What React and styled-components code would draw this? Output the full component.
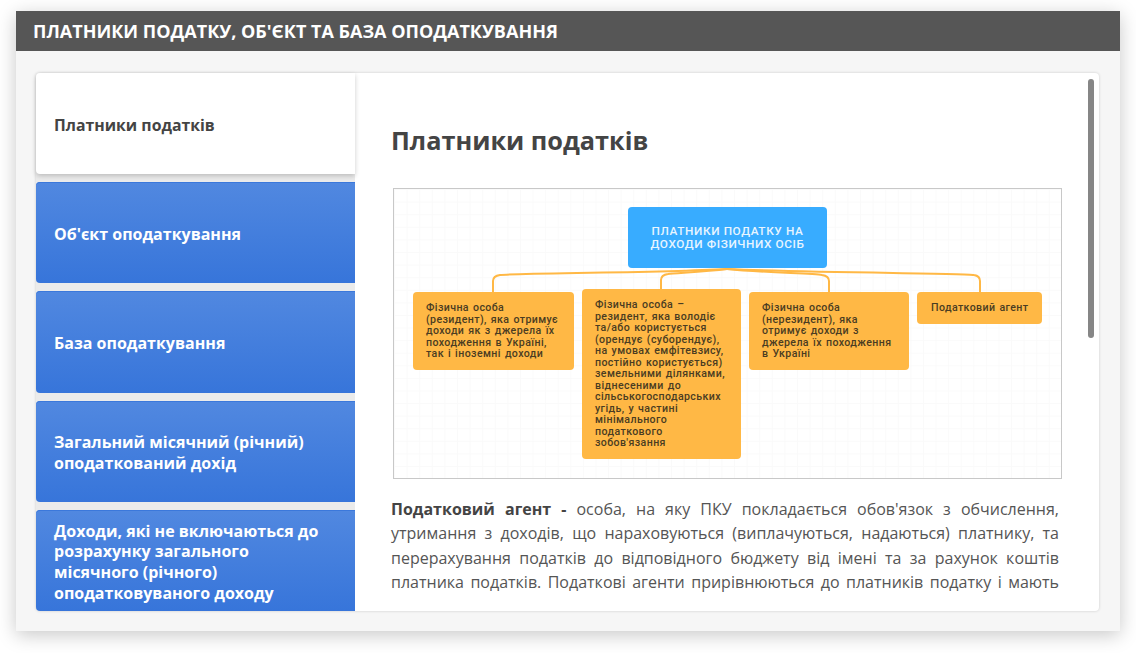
import styled, { createGlobalStyle } from 'styled-components';

const GlobalStyle = createGlobalStyle`
  html, body {
    margin: 0;
    padding: 0;
    background: #fff;
    font-family: "Open Sans", "Noto Sans", sans-serif;
  }
`;

const Page = styled.div`
  width: 1136px;
  height: 653px;
  box-sizing: border-box;
  padding: 11px 16px 22px;
  overflow: hidden;
`;

const Card = styled.section`
  height: 100%;
  display: flex;
  flex-direction: column;
  background: #f6f6f6;
  box-shadow: 0 4px 18px rgba(0, 0, 0, 0.22);
`;

const Header = styled.header`
  height: 40px;
  flex: none;
  display: flex;
  align-items: center;
  padding-left: 17px;
  background: #565656;
  color: #fff;
  font-size: 18px;
  font-weight: 700;
  text-transform: uppercase;
`;

const Body = styled.div`
  flex: 1;
  min-height: 0;
  padding: 22px 21px 20px 20px;
  display: flex;
`;

const Panel = styled.div`
  position: relative;
  flex: 1;
  min-width: 0;
  display: flex;
  background: #fff;
  border-radius: 4px;
  box-shadow: 0 0 3px rgba(0, 0, 0, 0.18);
`;

const Side = styled.nav`
  width: 319px;
  flex: none;
  display: flex;
  flex-direction: column;
  gap: 8px;
  background: #ebebeb;
  border-radius: 4px 0 0 4px;
`;

const Tab = styled.button`
  flex: 1;
  min-height: 0;
  border: none;
  border-radius: 4px 0 0 4px;
  padding: 3px 24px 0 18px;
  text-align: left;
  font-family: inherit;
  font-size: ${(p) => (p.$active ? '15.8px' : '16px')};
  line-height: 20.6px;
  font-weight: 700;
  color: ${(p) => (p.$active ? '#444' : '#fff')};
  background: ${(p) =>
    p.$active ? '#fff' : 'linear-gradient(180deg, #5188e0 0%, #3775da 100%)'};
  box-shadow: ${(p) =>
    p.$active ? '0 2px 5px rgba(0, 0, 0, 0.2)' : 'inset 0 1px 0 #3b78db'};
`;

const Content = styled.main`
  flex: 1;
  min-width: 0;
  height: 538px;
  box-sizing: border-box;
  padding: 0 36px;
  overflow: hidden;
`;

const Thumb = styled.div`
  position: absolute;
  top: 6px;
  right: 5px;
  width: 6px;
  height: 259px;
  border-radius: 3px;
  background: #868686;
`;

const Title = styled.h2`
  margin: 0;
  padding-top: 48px;
  font-size: 25.3px;
  line-height: 38px;
  font-weight: 700;
  color: #444;
`;

const Diagram = styled.figure`
  position: relative;
  box-sizing: border-box;
  margin: 29px 0 0 2px;
  width: 669px;
  height: 291px;
  border: 1px solid #c8c8c8;
  background-color: #fff;
  background-image: linear-gradient(#fafafa 1px, transparent 1px),
    linear-gradient(90deg, #fafafa 1px, transparent 1px);
  background-size: 12.6px 12.6px;
  font-family: Roboto, "Noto Sans", sans-serif;
`;

const Lines = styled.svg`
  position: absolute;
  inset: 0;
`;

const RootNode = styled.div`
  position: absolute;
  left: 234px;
  top: 18px;
  width: 199px;
  height: 61px;
  display: flex;
  align-items: center;
  justify-content: center;
  text-align: center;
  background: #38acff;
  border-radius: 4px;
  color: #e8f5ff;
  font-size: 11.8px;
  line-height: 13px;
  font-weight: 500;
  letter-spacing: 0.6px;
`;

const Node = styled.div`
  position: absolute;
  left: ${(p) => p.$x}px;
  top: ${(p) => p.$y}px;
  width: ${(p) => p.$w}px;
  height: ${(p) => p.$h}px;
  box-sizing: border-box;
  padding: ${(p) => (p.$pad ? p.$pad : '10px 8px 0 13px')};
  background: #ffb845;
  border-radius: 4px;
  color: #4a3c22;
  font-size: 10.6px;
  line-height: 11.5px;
  font-weight: 500;
  letter-spacing: 0.4px;
  word-spacing: 1px;
  white-space: pre;
`;

const Text = styled.p`
  margin: 18px 0 0;
  width: 668px;
  font-size: 16px;
  line-height: 24.4px;
  color: #555;
  text-align: justify;
  text-align-last: justify;

  b {
    color: #444;
    font-weight: 700;
  }
`;

const tabs = [
  'Платники податків',
  "Об'єкт оподаткування",
  'База оподаткування',
  'Загальний місячний (річний) оподаткований дохід',
  'Доходи, які не включаються до розрахунку загального місячного (річного) оподатковуваного доходу',
];

const nodes = [
  {
    x: 19, y: 103, w: 161, h: 78,
    text: 'Фізична особа\n(резидент), яка отримує\nдоходи як з джерела їх\nпоходження в Україні,\nтак і іноземні доходи',
  },
  {
    x: 188, y: 100, w: 159, h: 170,
    text: "Фізична особа –\nрезидент, яка володіє\nта/або користується\n(орендує (суборендує),\nна умовах емфітевзису,\nпостійно користується)\nземельними ділянками,\nвіднесеними до\nсільськогосподарських\nугідь, у частині\nмінімального\nподаткового\nзобов'язання",
  },
  {
    x: 355, y: 103, w: 160, h: 78,
    text: 'Фізична особа\n(нерезидент), яка\nотримує доходи з\nджерела їх походження\nв Україні',
  },
  {
    x: 523, y: 103, w: 125, h: 32, pad: '10px 0 0 14px',
    text: 'Податковий агент',
  },
];

export default function App() {
  return (
    <>
      <GlobalStyle />
      <Page>
        <Card>
          <Header>Платники податку, об'єкт та база оподаткування</Header>
          <Body>
            <Panel>
              <Side>
                {tabs.map((t, i) => (
                  <Tab key={t} $active={i === 0}>
                    {t}
                  </Tab>
                ))}
              </Side>
              <Content>
                <Title>Платники податків</Title>
                <Diagram>
                  <Lines width="667" height="289" fill="none" stroke="#ffb845" strokeWidth="2">
                    <path d="M333 80 C260 84 130 84 106 86 Q99 87 99 92 V103" />
                    <path d="M333 80 C310 83 280 84 274 85 Q267 86 267 91 V100" />
                    <path d="M333 80 C370 84 420 84 428 86 Q435 87 435 92 V103" />
                    <path d="M333 80 C420 84 570 84 580 86 Q586 87 586 92 V103" />
                  </Lines>
                  <RootNode>
                    ПЛАТНИКИ ПОДАТКУ НА
                    <br />
                    ДОХОДИ ФІЗИЧНИХ ОСІБ
                  </RootNode>
                  {nodes.map((n) => (
                    <Node key={n.x} $x={n.x} $y={n.y} $w={n.w} $h={n.h} $pad={n.pad}>
                      {n.text}
                    </Node>
                  ))}
                </Diagram>
                <Text>
                  <b>Податковий агент -</b> особа, на яку ПКУ покладається обов'язок з обчислення,
                  утримання з доходів, що нараховуються (виплачуються, надаються) платнику, та
                  перерахування податків до відповідного бюджету від імені та за рахунок коштів
                  платника податків. Податкові агенти прирівнюються до платників податку і мають
                </Text>
              </Content>
              <Thumb />
            </Panel>
          </Body>
        </Card>
      </Page>
    </>
  );
}
